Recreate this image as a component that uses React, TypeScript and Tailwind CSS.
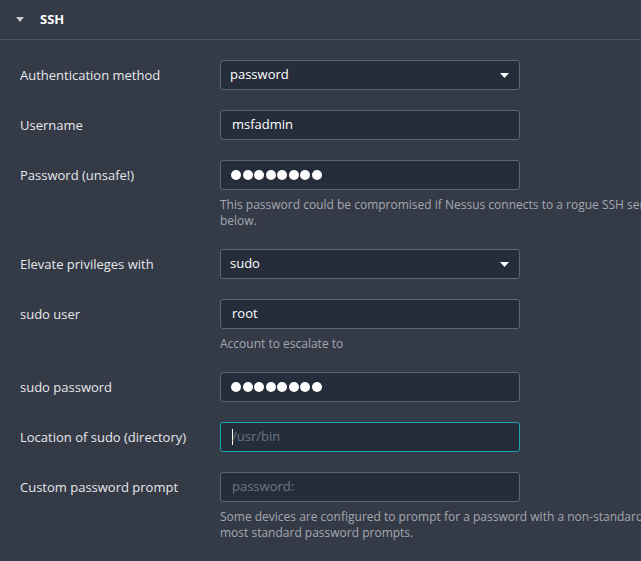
import React from "react";

type Row = {
  label: string;
  kind: "select" | "text" | "password";
  value?: string;
  placeholder?: string;
  focused?: boolean;
  help?: React.ReactNode;
};

const rows: Row[] = [
  { label: "Authentication method", kind: "select", value: "password" },
  { label: "Username", kind: "text", value: "msfadmin" },
  {
    label: "Password (unsafe!)",
    kind: "password",
    help: (
      <>
        This password could be compromised if Nessus connects to a rogue SSH server or is the victim of a man-in-the-middle
        <br />
        below.
      </>
    ),
  },
  { label: "Elevate privileges with", kind: "select", value: "sudo" },
  { label: "sudo user", kind: "text", value: "root", help: "Account to escalate to" },
  { label: "sudo password", kind: "password" },
  { label: "Location of sudo (directory)", kind: "text", placeholder: "/usr/bin", focused: true },
  {
    label: "Custom password prompt",
    kind: "text",
    placeholder: "password:",
    help: (
      <>
        Some devices are configured to prompt for a password with a non-standard prompt (e.g. "secret-passcode:"). Nessus
        <br />
        most standard password prompts.
      </>
    ),
  },
];

function Field({ row }: { row: Row }) {
  const base =
    "h-[30px] w-[300px] rounded-[3px] border bg-[#252d3b] text-[13px] text-white flex items-center";
  if (row.kind === "select") {
    return (
      <div className={`${base} border-[#5b6576] pl-[9px] pr-[10px] justify-between`}>
        <span>{row.value}</span>
        <svg width="9" height="5" viewBox="0 0 9 5">
          <path d="M0 0h9L4.5 5z" fill="#ffffff" />
        </svg>
      </div>
    );
  }
  if (row.kind === "password") {
    return (
      <div className={`${base} border-[#5b6576] pl-[10px] gap-[1.5px]`}>
        {Array.from({ length: 8 }).map((_, i) => (
          <span key={i} className="block h-[10px] w-[10px] rounded-full bg-white" />
        ))}
      </div>
    );
  }
  return (
    <div className={`${base} ${row.focused ? "border-[#1fa3b3]" : "border-[#5b6576]"} pl-[11px]`}>
      {row.focused && <span className="mr-[-1px] block h-[16px] w-[1px] bg-white" />}
      {row.value ? (
        <span>{row.value}</span>
      ) : (
        <span className="text-[#6c7584]">{row.placeholder}</span>
      )}
    </div>
  );
}

export default function App() {
  return (
    <div
      className="min-h-screen w-full overflow-hidden bg-[#353a47] text-[#e6e8eb]"
      style={{ fontFamily: '"Open Sans", "Liberation Sans", sans-serif' }}
    >
      <div className="flex h-[40px] items-center border-b border-[#4d5564] pl-[16px]">
        <svg width="8" height="5" viewBox="0 0 8 5" className="mr-[16px]">
          <path d="M0 0h8L4 5z" fill="#c9ccd2" />
        </svg>
        <span className="text-[13px] font-bold text-white">SSH</span>
      </div>
      <div className="w-[1000px] pt-[20px]">
        {rows.map((row) => (
          <div key={row.label} className="mb-[20px] flex">
            <div className="flex h-[30px] w-[220px] items-center pl-[20px] pt-[2px] text-[13px]">{row.label}</div>
            <div>
              <Field row={row} />
              {row.help && (
                <div className="mt-[7px] whitespace-nowrap text-[12px] leading-[16px] text-[#a3a8b0]">
                  {row.help}
                </div>
              )}
            </div>
          </div>
        ))}
      </div>
    </div>
  );
}
